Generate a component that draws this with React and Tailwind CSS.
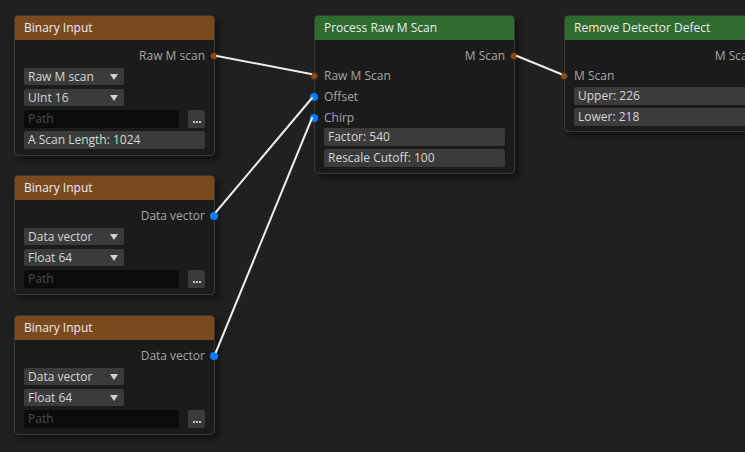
const font = { fontFamily: '"Open Sans", "Noto Sans", sans-serif' };

const Pin = ({ side, color }) => (
  <span
    className={`absolute top-1/2 -translate-y-1/2 w-[8px] h-[8px] rounded-full ${side === "left" ? "left-[-14px]" : "right-[-13px]"} ${color === "blue" ? "bg-[#0a7cff]" : "bg-[#8a4b1c] border border-[#4a2a10]"}`}
  />
);

const OutRow = ({ label, color }) => (
  <div className="relative h-[18px] flex items-center justify-end text-[12px] text-[#a6a6a6]">
    {label}
    <Pin side="right" color={color} />
  </div>
);

const InRow = ({ label, color, className = "" }) => (
  <div className={`relative h-[19px] flex items-center text-[12px] text-[#a6a6a6] ${className}`}>
    {label}
    <Pin side="left" color={color} />
  </div>
);

const Combo = ({ value, className = "" }) => (
  <div className={`w-[100px] h-[17px] bg-[#3b3b3b] rounded-[2px] flex items-center justify-between pl-[4px] pr-[6px] text-[12px] text-[#d6d6d6] ${className}`}>
    <span>{value}</span>
    <span className="w-0 h-0 border-l-[4px] border-r-[4px] border-t-[6px] border-l-transparent border-r-transparent border-t-[#d0d0d0]" />
  </div>
);

const Field = ({ children, className = "" }) => (
  <div className={`h-[18px] bg-[#3b3b3b] rounded-[2px] flex items-center pl-[4px] text-[12px] text-[#d6d6d6] ${className}`}>
    {children}
  </div>
);

const PathRow = ({ className = "" }) => (
  <div className={`flex items-center justify-between ${className}`}>
    <div className="w-[155px] h-[18px] bg-[#0b0b0b] rounded-[2px] flex items-center pl-[4px] text-[12px] text-[#4c4c4c]">Path</div>
    <div className="w-[17px] h-[18px] bg-[#3b3b3b] rounded-[2px] flex items-end justify-center pb-[5px] gap-[1px]">
      <span className="w-[2px] h-[2px] bg-[#c8c8c8]" />
      <span className="w-[2px] h-[2px] bg-[#c8c8c8]" />
      <span className="w-[2px] h-[2px] bg-[#c8c8c8]" />
    </div>
  </div>
);

const Node = ({ title, color, className, children, pb = "pb-[6px]" }) => (
  <div className={`absolute w-[201px] rounded-[4px] border border-[#3a3a3a] bg-[#1b1b1b] shadow-[4px_4px_6px_rgba(0,0,0,0.45)] ${className}`}>
    <div className={`h-[24px] rounded-t-[3px] flex items-center pl-[9px] text-[12px] text-[#ececec] ${color === "green" ? "bg-[#2e6b2f]" : "bg-[#7a4a1f]"}`}>
      {title}
    </div>
    <div className={`px-[9px] pt-[7px] flex flex-col ${pb}`}>{children}</div>
  </div>
);

export default function App() {
  return (
    <div className="relative w-[745px] h-[452px] overflow-hidden bg-[#202020]" style={font}>
      <Node title="Binary Input" className="left-[14px] top-[15px]">
        <OutRow label="Raw M scan" color="brown" />
        <Combo value="Raw M scan" className="mt-[3px]" />
        <Combo value="UInt 16" className="mt-[4px]" />
        <PathRow className="mt-[4px]" />
        <Field className="mt-[3px]">A Scan Length: 1024</Field>
      </Node>

      <Node title="Binary Input" className="left-[14px] top-[175px]">
        <OutRow label="Data vector" color="blue" />
        <Combo value="Data vector" className="mt-[3px]" />
        <Combo value="Float 64" className="mt-[4px]" />
        <PathRow className="mt-[4px]" />
      </Node>

      <Node title="Binary Input" className="left-[14px] top-[315px]">
        <OutRow label="Data vector" color="blue" />
        <Combo value="Data vector" className="mt-[3px]" />
        <Combo value="Float 64" className="mt-[4px]" />
        <PathRow className="mt-[4px]" />
      </Node>

      <Node title="Process Raw M Scan" color="green" className="left-[314px] top-[15px]">
        <OutRow label="M Scan" color="brown" />
        <InRow label="Raw M Scan" color="brown" className="mt-[1px]" />
        <InRow label="Offset" color="blue" className="mt-[2px]" />
        <InRow label="Chirp" color="blue" className="mt-[2px]" />
        <Field className="mt-[1px]">Factor: 540</Field>
        <Field className="mt-[3px]">Rescale Cutoff: 100</Field>
      </Node>

      <Node title="Remove Detector Defect" color="green" className="left-[564px] top-[15px]" pb="pb-[5px]">
        <OutRow label="M Scan" color="brown" />
        <InRow label="M Scan" color="brown" className="mt-[1px]" />
        <Field className="mt-[2px]">Upper: 226</Field>
        <Field className="mt-[3px]">Lower: 218</Field>
      </Node>

      <svg className="absolute inset-0 pointer-events-none" width="745" height="452">
        <g fill="none" stroke="#ececec" strokeWidth="2" strokeLinecap="round">
          <path d="M217,56 L311,74" />
          <path d="M216,212 L312,98" />
          <path d="M216,352 L312,118" />
          <path d="M517,56 L561,74" />
        </g>
      </svg>
    </div>
  );
}
